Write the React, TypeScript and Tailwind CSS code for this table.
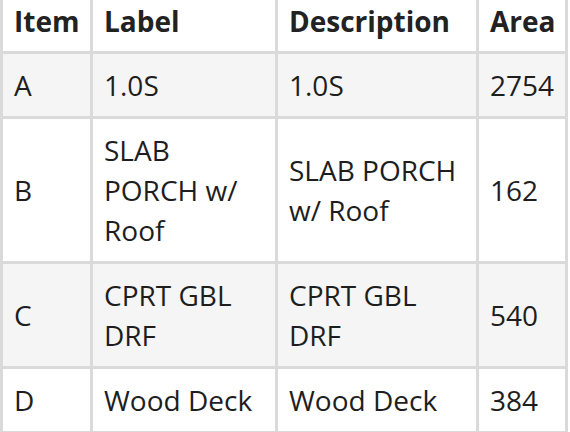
const rows = [
  { item: "A", label: "1.0S", description: "1.0S", area: "2754" },
  { item: "B", label: "SLAB PORCH w/ Roof", description: "SLAB PORCH w/ Roof", area: "162" },
  { item: "C", label: "CPRT GBL DRF", description: "CPRT GBL DRF", area: "540" },
  { item: "D", label: "Wood Deck", description: "Wood Deck", area: "384" },
]

const headers = ["Item", "Label", "Description", "Area"]

export default function App() {
  return (
    <div className="h-[432px] w-[570px] overflow-hidden bg-white font-['Open_Sans',sans-serif] text-[#1e1e1e]">
      <div className="-mt-[12px] grid w-[568px] grid-cols-[87px_182px_198px_86px] gap-[3px] bg-[#dadada] p-[3px] text-[28px] leading-[40px]">
        {headers.map((h) => (
          <div key={h} className="flex h-[60px] items-center bg-white px-[11px] font-bold text-[#222]">
            {h}
          </div>
        ))}
        {rows.map((row, i) => {
          const bg = i % 2 === 0 ? "bg-[#f5f5f5]" : "bg-white"
          return [row.item, row.label, row.description, row.area].map((cell, j) => (
            <div key={`${i}-${j}`} className={`flex items-center py-[11px] px-[11px] ${bg}`}>
              {cell}
            </div>
          ))
        })}
      </div>
    </div>
  )
}
